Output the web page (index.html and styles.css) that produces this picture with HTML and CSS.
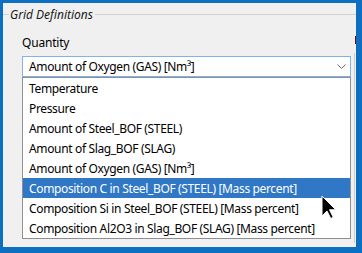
FILE: index.html
```html
<!DOCTYPE html>
<html lang="en">
<head>
    <meta charset="UTF-8">
    <meta name="viewport" content="width=device-width, initial-scale=1.0">
    <title>Grid Definitions</title>
    <link rel="stylesheet" href="styles.css">
</head>
<body>

    <div class="window">
        <div class="group-title">
            <span class="rule short"></span>
            <span class="title">Grid Definitions</span>
            <span class="rule"></span>
        </div>

        <div class="group-body">
            <div class="field">
                <div class="label">Quantity</div>
                <div class="combo">
                    <span class="combo-value">Amount of Oxygen (GAS) [Nm³]</span>
                    <svg class="chevron" width="9" height="5" viewBox="0 0 9 5">
                        <polyline points="0.5,0.5 4.5,4.5 8.5,0.5" fill="none" stroke="#6a6a6a" stroke-width="1"/>
                    </svg>
                </div>
                <ul class="options">
                    <li>Temperature</li>
                    <li>Pressure</li>
                    <li>Amount of Steel_BOF (STEEL)</li>
                    <li>Amount of Slag_BOF (SLAG)</li>
                    <li>Amount of Oxygen (GAS) [Nm³]</li>
                    <li class="selected">Composition C in Steel_BOF (STEEL) [Mass percent]</li>
                    <li>Composition Si in Steel_BOF (STEEL) [Mass percent]</li>
                    <li>Composition Al2O3 in Slag_BOF (SLAG) [Mass percent]</li>
                </ul>
            </div>
            <div class="side">
                <span class="side-label"></span>
                <span class="side-box"></span>
            </div>
        </div>

        <!-- mouse pointer over the open list -->
        <svg class="cursor" width="16" height="25" viewBox="0 0 16 25">
            <path d="M1,1 L1,21 L6,16 L9.75,23.5 L12.25,22.25 L8.5,14.75 L14.75,14.75 Z" fill="#000" stroke="#fff" stroke-width="1" stroke-linejoin="miter"/>
        </svg>
    </div>

</body>
</html>
```

FILE: styles.css
```css
body {
    margin: 0;
    padding: 0;
    background: #0c6fc0;
    font-family: 'Noto Sans', sans-serif;
    font-size: 12px;
    color: #000000;
    height: 253px;
    overflow: hidden;
}

.window {
    position: relative;
    margin: 3px 0 0 3px;
    width: 353px;
    height: 244px;
    background-color: #f0f0f0;
}

.group-title {
    display: flex;
    align-items: center;
    height: 22px;
}

.rule {
    flex: 1;
    height: 1px;
    background-color: #d2d2d2;
}

.rule.short {
    flex: none;
    width: 6px;
}

.title {
    font-style: italic;
    color: #1a1a1a;
    padding: 0 2px 0 1px;
    line-height: 15px;
}

.group-body {
    display: flex;
}

.field {
    margin-left: 19px;
    width: 329px;
    letter-spacing: -0.35px;
}

.label {
    margin-top: 10px;
    line-height: 15px;
    height: 15px;
    margin-bottom: 6px;
    letter-spacing: -0.2px;
}

.combo {
    box-sizing: border-box;
    height: 21px;
    border: 1px solid #7eb4ea;
    background-color: #ffffff;
    display: flex;
    align-items: center;
    padding: 0 4px 0 6px;
    line-height: 19px;
}

.combo-value {
    flex: 1;
}

.options {
    list-style: none;
    margin: 0;
    padding: 0;
    border: 1px solid #8f8f8f;
    background-color: #ffffff;
}

.options li {
    height: 20px;
    line-height: 21px;
    padding-left: 6px;
    white-space: nowrap;
}

.options li.selected {
    background-color: #3078c6;
    color: #ffffff;
}

.side {
    display: flex;
    flex-direction: column;
    margin-left: 3px;
    width: 2px;
}

.side-label {
    margin: 11px 0 0 1px;
    width: 1px;
    height: 8px;
    background-color: #7a0a0a;
}

.side-box {
    margin-top: 9px;
    height: 190px;
    border-left: 1px solid #cdcdcd;
}

.cursor {
    position: absolute;
    left: 318px;
    top: 192px;
}
```
